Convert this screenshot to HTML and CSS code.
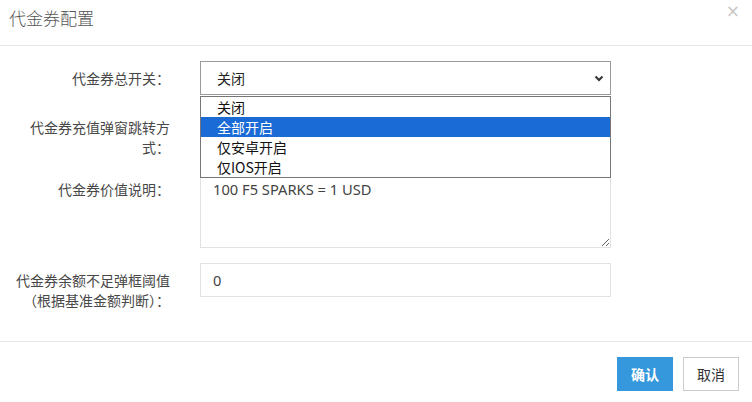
FILE: index.html
```html
<!DOCTYPE html>
<html lang="zh-CN">
<head>
<meta charset="utf-8">
<title>代金券配置</title>
<link rel="stylesheet" href="styles.css">
</head>
<body>
<div class="modal">
  <div class="modal-header">
    <h4 class="modal-title">代金券配置</h4>
    <span class="close">×</span>
  </div>
  <div class="modal-body">
    <div class="form-row">
      <label class="form-label">代金券总开关：</label>
      <div class="form-control-wrap">
        <div class="select">
          <span class="select-value">关闭</span>
          <svg class="chevron" width="10" height="7" viewBox="0 0 10 7"><path d="M1.5 1.5 L5 5 L8.5 1.5" fill="none" stroke="#333" stroke-width="2"/></svg>
        </div>
        <ul class="dropdown">
          <li class="option">关闭</li>
          <li class="option option-active">全部开启</li>
          <li class="option">仅安卓开启</li>
          <li class="option">仅IOS开启</li>
        </ul>
      </div>
    </div>
    <div class="form-row">
      <label class="form-label">代金券充值弹窗跳转方式：</label>
      <div class="form-control-wrap">
        <div class="select select-hidden"></div>
      </div>
    </div>
    <div class="form-row">
      <label class="form-label">代金券价值说明：</label>
      <div class="form-control-wrap">
        <textarea class="textarea">100 F5 SPARKS = 1 USD</textarea>
      </div>
    </div>
    <div class="form-row">
      <label class="form-label">代金券余额不足弹框阈值（根据基准金额判断）：</label>
      <div class="form-control-wrap">
        <input class="input" type="text" value="0">
      </div>
    </div>
  </div>
  <div class="modal-footer">
    <button class="btn btn-primary">确认</button>
    <button class="btn btn-default">取消</button>
  </div>
</div>
</body>
</html>
```
FILE: styles.css
```css
* { box-sizing: border-box; }
html, body {
  margin: 0;
  padding: 0;
  background: #fff;
}
body {
  font-family: "Noto Sans", "Noto Sans CJK SC", sans-serif;
  font-size: 14px;
  line-height: 20px;
  color: #333;
}
.modal {
  width: 752px;
  height: 402px;
  display: flex;
  flex-direction: column;
}
.modal-header {
  height: 46px;
  border-bottom: 1px solid #e5e5e5;
  display: flex;
  justify-content: space-between;
  align-items: flex-start;
  padding: 5px 12px 0 9px;
}
.modal-title {
  margin: 0;
  font-size: 17px;
  line-height: 26px;
  font-weight: 300;
  color: #555;
  font-family: "Noto Sans CJK SC", sans-serif;
}
.close {
  font-family: "DejaVu Sans", sans-serif;
  font-size: 17px;
  line-height: 20px;
  margin-top: -4px;
  color: #c8c8c8;
}
.modal-body {
  flex: 1;
  padding: 15px 0 0 10px;
}
.form-row {
  display: grid;
  grid-template-columns: 160px 411px;
  column-gap: 30px;
  margin-bottom: 15px;
}
.form-label {
  text-align: right;
  padding-top: 7px;
  font-family: "Noto Sans CJK SC", sans-serif;
  color: #484848;
}
.form-control-wrap {
  position: relative;
}
.select {
  height: 34px;
  border: 1px solid #9a9a9a;
  display: flex;
  align-items: center;
  justify-content: space-between;
  padding: 0 6px 0 16px;
  font-family: "Noto Sans CJK SC", sans-serif;
  color: #222;
}
.select-hidden { border-color: #ccc; }
.chevron { display: block; }
.dropdown {
  position: absolute;
  top: 35px;
  left: 0;
  width: 411px;
  margin: 0;
  padding: 0;
  list-style: none;
  background: #fff;
  border: 1px solid #767676;
  z-index: 2;
  font-family: "Noto Sans CJK SC", sans-serif;
}
.option {
  height: 20px;
  line-height: 20px;
  padding-left: 16px;
  color: #111;
}
.option-active {
  background: #1a6bd6;
  color: #fff;
}
.textarea {
  display: block;
  width: 411px;
  height: 76px;
  border: 1px solid #e2e2e2;
  padding: 6px 12px;
  font-family: "Noto Sans", "Noto Sans CJK SC", sans-serif;
  font-size: 14.7px;
  line-height: 20px;
  color: #444;
  resize: vertical;
  margin: 0;
  outline: none;
}
.input {
  display: block;
  width: 411px;
  height: 34px;
  border: 1px solid #e2e2e2;
  padding: 6px 12px;
  font-family: "Noto Sans", "Noto Sans CJK SC", sans-serif;
  font-size: 14.7px;
  color: #444;
  margin: 0;
  outline: none;
}
.modal-footer {
  border-top: 1px solid #e5e5e5;
  height: 61px;
  display: flex;
  justify-content: flex-end;
  align-items: flex-start;
  gap: 10px;
  padding: 15px 13px 0 0;
}
.btn {
  width: 56px;
  height: 34px;
  font-family: "Noto Sans CJK SC", sans-serif;
  font-size: 14px;
  padding: 0;
  border-radius: 0;
  cursor: pointer;
}
.btn-primary {
  background: #3598dc;
  border: 1px solid #3598dc;
  color: #fff;
  font-weight: 700;
}
.btn-default {
  background: #fff;
  border: 1px solid #ccc;
  color: #333;
}
```
